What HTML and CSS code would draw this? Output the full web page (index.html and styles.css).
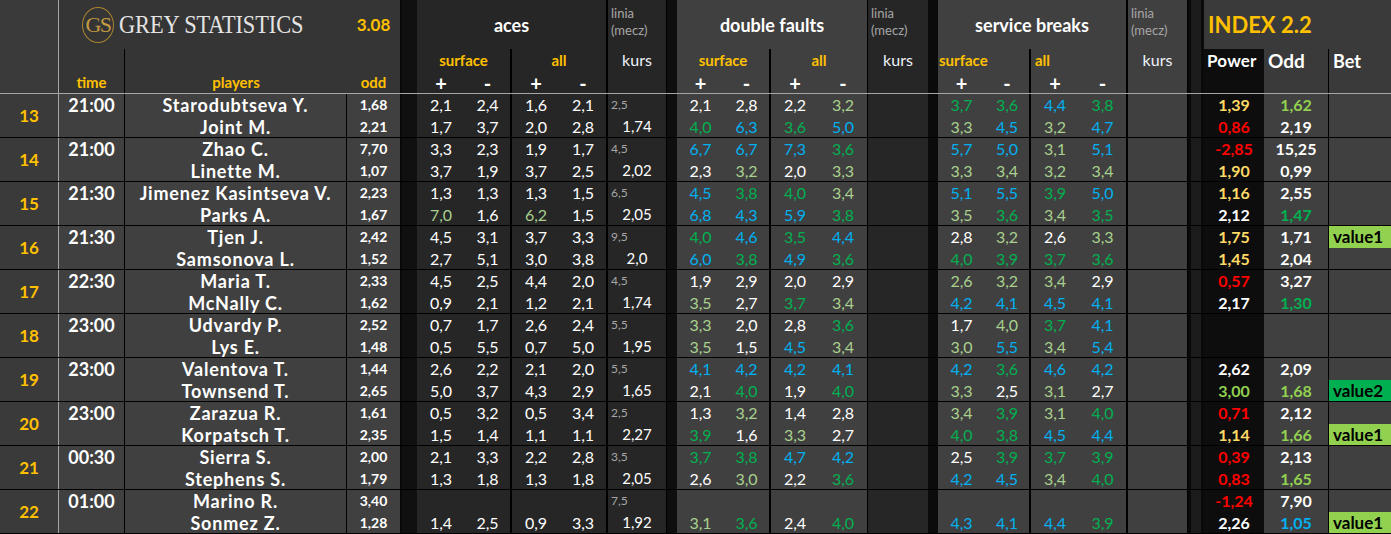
FILE: index.html
```html
<!DOCTYPE html>
<html lang="pl">
<head>
<meta charset="utf-8">
<title>Grey Statistics</title>
<link rel="stylesheet" href="styles.css">
</head>
<body>
<div class="sheet">
  <header class="head">
    <div class="h-num"></div>
    <div class="h-left">
      <div class="brand"><span class="ring">GS</span><span class="brand-name">GREY STATISTICS</span></div>
      <div class="version">3.08</div>
      <div class="lbl lbl-time">time</div>
      <div class="lbl">players</div>
      <div class="lbl">odd</div>
    </div>
    <div class="sep sep-a"></div>
    <div class="grp grp-aces">
      <div class="title dv">aces</div>
      <div class="hkurs dv1"><span class="linia-h">linia<br>(mecz)</span><span class="kurs-h">kurs</span></div>
      <div class="sub dv">surface</div>
      <div class="sub dv">all</div>
      <div class="pm">+</div>
      <div class="pm dv">-</div>
      <div class="pm">+</div>
      <div class="pm dv">-</div>
    </div>
    <div class="sep sep-b"></div>
    <div class="grp grp-df">
      <div class="title dv1">double faults</div>
      <div class="hkurs"><span class="linia-h">linia<br>(mecz)</span><span class="kurs-h">kurs</span></div>
      <div class="sub dv">surface</div>
      <div class="sub dv1">all</div>
      <div class="pm">+</div>
      <div class="pm dv">-</div>
      <div class="pm">+</div>
      <div class="pm dv1">-</div>
    </div>
    <div class="sep sep-c"></div>
    <div class="grp grp-sb">
      <div class="title dv">service breaks</div>
      <div class="hkurs dv1"><span class="linia-h">linia<br>(mecz)</span><span class="kurs-h">kurs</span></div>
      <div class="sub dv">surface</div>
      <div class="sub dv">all</div>
      <div class="pm">+</div>
      <div class="pm dv">-</div>
      <div class="pm">+</div>
      <div class="pm dv">-</div>
    </div>
    <div class="sep sep-d"></div>
    <div class="grp-idx">
      <div class="idx-title">INDEX 2.2</div>
      <div class="idx-h idx-power">Power</div>
      <div class="idx-h idx-odd">Odd</div>
      <div class="idx-h idx-bet">Bet</div>
    </div>
  </header>

  <div class="match">
    <div class="num">13</div>
    <div class="time"><span>21:00</span></div>
    <div class="players"><span>Starodubtseva Y.</span><span>Joint M.</span></div>
    <div class="odd"><span>1,68</span><span>2,21</span></div>
    <div class="sep sep-a"></div>
    <div class="ac"><span>2,1</span><span>1,7</span></div>
    <div class="ac dv"><span>2,4</span><span>3,7</span></div>
    <div class="ac"><span>1,6</span><span>2,0</span></div>
    <div class="ac dv"><span>2,1</span><span>2,8</span></div>
    <div class="kurs ak"><span class="linia">2,5</span><span>1,74</span></div>
    <div class="sep sep-b"></div>
    <div class="df"><span>2,1</span><span class="g">4,0</span></div>
    <div class="df dv"><span>2,8</span><span class="b">6,3</span></div>
    <div class="df"><span>2,2</span><span class="g">3,6</span></div>
    <div class="df dv1"><span class="lg">3,2</span><span class="b">5,0</span></div>
    <div class="kurs dk"></div>
    <div class="sep sep-c"></div>
    <div class="sb"><span class="g">3,7</span><span class="lg">3,3</span></div>
    <div class="sb dv"><span class="g">3,6</span><span class="b">4,5</span></div>
    <div class="sb"><span class="b">4,4</span><span class="lg">3,2</span></div>
    <div class="sb dv"><span class="g">3,8</span><span class="b">4,7</span></div>
    <div class="kurs sk"></div>
    <div class="sep sep-d"></div>
    <div class="power"><span class="y">1,39</span><span class="r">0,86</span></div>
    <div class="odd2"><span class="lm">1,62</span><span>2,19</span></div>
    <div class="bet"></div>
  </div>

  <div class="match">
    <div class="num">14</div>
    <div class="time"><span>21:00</span></div>
    <div class="players"><span>Zhao C.</span><span>Linette M.</span></div>
    <div class="odd"><span>7,70</span><span>1,07</span></div>
    <div class="sep sep-a"></div>
    <div class="ac"><span>3,3</span><span>3,7</span></div>
    <div class="ac dv"><span>2,3</span><span>1,9</span></div>
    <div class="ac"><span>1,9</span><span>3,7</span></div>
    <div class="ac dv"><span>1,7</span><span>2,5</span></div>
    <div class="kurs ak"><span class="linia">4,5</span><span>2,02</span></div>
    <div class="sep sep-b"></div>
    <div class="df"><span class="b">6,7</span><span>2,3</span></div>
    <div class="df dv"><span class="b">6,7</span><span class="lg">3,2</span></div>
    <div class="df"><span class="b">7,3</span><span>2,0</span></div>
    <div class="df dv1"><span class="g">3,6</span><span class="lg">3,3</span></div>
    <div class="kurs dk"></div>
    <div class="sep sep-c"></div>
    <div class="sb"><span class="b">5,7</span><span class="lg">3,3</span></div>
    <div class="sb dv"><span class="b">5,0</span><span class="lg">3,4</span></div>
    <div class="sb"><span class="lg">3,1</span><span class="lg">3,2</span></div>
    <div class="sb dv"><span class="b">5,1</span><span class="lg">3,4</span></div>
    <div class="kurs sk"></div>
    <div class="sep sep-d"></div>
    <div class="power"><span class="r">-2,85</span><span class="y">1,90</span></div>
    <div class="odd2"><span>15,25</span><span>0,99</span></div>
    <div class="bet"></div>
  </div>

  <div class="match">
    <div class="num">15</div>
    <div class="time"><span>21:30</span></div>
    <div class="players"><span>Jimenez Kasintseva V.</span><span>Parks A.</span></div>
    <div class="odd"><span>2,23</span><span>1,67</span></div>
    <div class="sep sep-a"></div>
    <div class="ac"><span>1,3</span><span class="lg">7,0</span></div>
    <div class="ac dv"><span>1,3</span><span>1,6</span></div>
    <div class="ac"><span>1,3</span><span class="lg">6,2</span></div>
    <div class="ac dv"><span>1,5</span><span>1,5</span></div>
    <div class="kurs ak"><span class="linia">6,5</span><span>2,05</span></div>
    <div class="sep sep-b"></div>
    <div class="df"><span class="b">4,5</span><span class="b">6,8</span></div>
    <div class="df dv"><span class="g">3,8</span><span class="b">4,3</span></div>
    <div class="df"><span class="g">4,0</span><span class="b">5,9</span></div>
    <div class="df dv1"><span class="lg">3,4</span><span class="g">3,8</span></div>
    <div class="kurs dk"></div>
    <div class="sep sep-c"></div>
    <div class="sb"><span class="b">5,1</span><span class="lg">3,5</span></div>
    <div class="sb dv"><span class="b">5,5</span><span class="g">3,6</span></div>
    <div class="sb"><span class="g">3,9</span><span class="lg">3,4</span></div>
    <div class="sb dv"><span class="b">5,0</span><span class="g">3,5</span></div>
    <div class="kurs sk"></div>
    <div class="sep sep-d"></div>
    <div class="power"><span class="y">1,16</span><span>2,12</span></div>
    <div class="odd2"><span>2,55</span><span class="g">1,47</span></div>
    <div class="bet"></div>
  </div>

  <div class="match">
    <div class="num">16</div>
    <div class="time"><span>21:30</span></div>
    <div class="players"><span>Tjen J.</span><span>Samsonova L.</span></div>
    <div class="odd"><span>2,42</span><span>1,52</span></div>
    <div class="sep sep-a"></div>
    <div class="ac"><span>4,5</span><span>2,7</span></div>
    <div class="ac dv"><span>3,1</span><span>5,1</span></div>
    <div class="ac"><span>3,7</span><span>3,0</span></div>
    <div class="ac dv"><span>3,3</span><span>3,8</span></div>
    <div class="kurs ak"><span class="linia">9,5</span><span>2,0</span></div>
    <div class="sep sep-b"></div>
    <div class="df"><span class="g">4,0</span><span class="b">6,0</span></div>
    <div class="df dv"><span class="b">4,6</span><span class="g">3,8</span></div>
    <div class="df"><span class="g">3,5</span><span class="b">4,9</span></div>
    <div class="df dv1"><span class="b">4,4</span><span class="g">3,6</span></div>
    <div class="kurs dk"></div>
    <div class="sep sep-c"></div>
    <div class="sb"><span>2,8</span><span class="g">4,0</span></div>
    <div class="sb dv"><span class="lg">3,2</span><span class="g">3,9</span></div>
    <div class="sb"><span>2,6</span><span class="g">3,7</span></div>
    <div class="sb dv"><span class="lg">3,3</span><span class="g">3,6</span></div>
    <div class="kurs sk"></div>
    <div class="sep sep-d"></div>
    <div class="power"><span class="y">1,75</span><span class="y">1,45</span></div>
    <div class="odd2"><span>1,71</span><span>2,04</span></div>
    <div class="bet"><span class="v1">value1</span><span></span></div>
  </div>

  <div class="match">
    <div class="num">17</div>
    <div class="time"><span>22:30</span></div>
    <div class="players"><span>Maria T.</span><span>McNally C.</span></div>
    <div class="odd"><span>2,33</span><span>1,62</span></div>
    <div class="sep sep-a"></div>
    <div class="ac"><span>4,5</span><span>0,9</span></div>
    <div class="ac dv"><span>2,5</span><span>2,1</span></div>
    <div class="ac"><span>4,4</span><span>1,2</span></div>
    <div class="ac dv"><span>2,0</span><span>2,1</span></div>
    <div class="kurs ak"><span class="linia">4,5</span><span>1,74</span></div>
    <div class="sep sep-b"></div>
    <div class="df"><span>1,9</span><span class="lg">3,5</span></div>
    <div class="df dv"><span>2,9</span><span>2,7</span></div>
    <div class="df"><span>2,0</span><span class="g">3,7</span></div>
    <div class="df dv1"><span>2,9</span><span class="lg">3,4</span></div>
    <div class="kurs dk"></div>
    <div class="sep sep-c"></div>
    <div class="sb"><span class="lg">2,6</span><span class="b">4,2</span></div>
    <div class="sb dv"><span class="lg">3,2</span><span class="b">4,1</span></div>
    <div class="sb"><span class="lg">3,4</span><span class="b">4,5</span></div>
    <div class="sb dv"><span>2,9</span><span class="b">4,1</span></div>
    <div class="kurs sk"></div>
    <div class="sep sep-d"></div>
    <div class="power"><span class="r">0,57</span><span>2,17</span></div>
    <div class="odd2"><span>3,27</span><span class="g">1,30</span></div>
    <div class="bet"></div>
  </div>

  <div class="match">
    <div class="num">18</div>
    <div class="time"><span>23:00</span></div>
    <div class="players"><span>Udvardy P.</span><span>Lys E.</span></div>
    <div class="odd"><span>2,52</span><span>1,48</span></div>
    <div class="sep sep-a"></div>
    <div class="ac"><span>0,7</span><span>0,5</span></div>
    <div class="ac dv"><span>1,7</span><span>5,5</span></div>
    <div class="ac"><span>2,6</span><span>0,7</span></div>
    <div class="ac dv"><span>2,4</span><span>5,0</span></div>
    <div class="kurs ak"><span class="linia">5,5</span><span>1,95</span></div>
    <div class="sep sep-b"></div>
    <div class="df"><span class="lg">3,3</span><span class="lg">3,5</span></div>
    <div class="df dv"><span>2,0</span><span>1,5</span></div>
    <div class="df"><span>2,8</span><span class="b">4,5</span></div>
    <div class="df dv1"><span class="g">3,6</span><span class="lg">3,4</span></div>
    <div class="kurs dk"></div>
    <div class="sep sep-c"></div>
    <div class="sb"><span>1,7</span><span class="lg">3,0</span></div>
    <div class="sb dv"><span class="lg">4,0</span><span class="b">5,5</span></div>
    <div class="sb"><span class="g">3,7</span><span class="lg">3,4</span></div>
    <div class="sb dv"><span class="b">4,1</span><span class="b">5,4</span></div>
    <div class="kurs sk"></div>
    <div class="sep sep-d"></div>
    <div class="power"></div>
    <div class="odd2"></div>
    <div class="bet"></div>
  </div>

  <div class="match">
    <div class="num">19</div>
    <div class="time"><span>23:00</span></div>
    <div class="players"><span>Valentova T.</span><span>Townsend T.</span></div>
    <div class="odd"><span>1,44</span><span>2,65</span></div>
    <div class="sep sep-a"></div>
    <div class="ac"><span>2,6</span><span>5,0</span></div>
    <div class="ac dv"><span>2,2</span><span>3,7</span></div>
    <div class="ac"><span>2,1</span><span>4,3</span></div>
    <div class="ac dv"><span>2,0</span><span>2,9</span></div>
    <div class="kurs ak"><span class="linia">5,5</span><span>1,65</span></div>
    <div class="sep sep-b"></div>
    <div class="df"><span class="b">4,1</span><span>2,1</span></div>
    <div class="df dv"><span class="b">4,2</span><span class="g">4,0</span></div>
    <div class="df"><span class="b">4,2</span><span>1,9</span></div>
    <div class="df dv1"><span class="b">4,1</span><span class="g">4,0</span></div>
    <div class="kurs dk"></div>
    <div class="sep sep-c"></div>
    <div class="sb"><span class="b">4,2</span><span class="lg">3,3</span></div>
    <div class="sb dv"><span class="g">3,6</span><span>2,5</span></div>
    <div class="sb"><span class="b">4,6</span><span class="lg">3,1</span></div>
    <div class="sb dv"><span class="b">4,2</span><span>2,7</span></div>
    <div class="kurs sk"></div>
    <div class="sep sep-d"></div>
    <div class="power"><span>2,62</span><span class="lm">3,00</span></div>
    <div class="odd2"><span>2,09</span><span class="lm">1,68</span></div>
    <div class="bet"><span></span><span class="v2">value2</span></div>
  </div>

  <div class="match">
    <div class="num">20</div>
    <div class="time"><span>23:00</span></div>
    <div class="players"><span>Zarazua R.</span><span>Korpatsch T.</span></div>
    <div class="odd"><span>1,61</span><span>2,35</span></div>
    <div class="sep sep-a"></div>
    <div class="ac"><span>0,5</span><span>1,5</span></div>
    <div class="ac dv"><span>3,2</span><span>1,4</span></div>
    <div class="ac"><span>0,5</span><span>1,1</span></div>
    <div class="ac dv"><span>3,4</span><span>1,1</span></div>
    <div class="kurs ak"><span class="linia">2,5</span><span>2,27</span></div>
    <div class="sep sep-b"></div>
    <div class="df"><span>1,3</span><span class="g">3,9</span></div>
    <div class="df dv"><span class="lg">3,2</span><span>1,6</span></div>
    <div class="df"><span>1,4</span><span class="lg">3,3</span></div>
    <div class="df dv1"><span>2,8</span><span>2,7</span></div>
    <div class="kurs dk"></div>
    <div class="sep sep-c"></div>
    <div class="sb"><span class="lg">3,4</span><span class="g">4,0</span></div>
    <div class="sb dv"><span class="g">3,9</span><span class="g">3,8</span></div>
    <div class="sb"><span class="lg">3,1</span><span class="b">4,5</span></div>
    <div class="sb dv"><span class="g">4,0</span><span class="b">4,4</span></div>
    <div class="kurs sk"></div>
    <div class="sep sep-d"></div>
    <div class="power"><span class="r">0,71</span><span class="y">1,14</span></div>
    <div class="odd2"><span>2,12</span><span class="lm">1,66</span></div>
    <div class="bet"><span></span><span class="v1">value1</span></div>
  </div>

  <div class="match">
    <div class="num">21</div>
    <div class="time"><span>00:30</span></div>
    <div class="players"><span>Sierra S.</span><span>Stephens S.</span></div>
    <div class="odd"><span>2,00</span><span>1,79</span></div>
    <div class="sep sep-a"></div>
    <div class="ac"><span>2,1</span><span>1,3</span></div>
    <div class="ac dv"><span>3,3</span><span>1,8</span></div>
    <div class="ac"><span>2,2</span><span>1,3</span></div>
    <div class="ac dv"><span>2,8</span><span>1,8</span></div>
    <div class="kurs ak"><span class="linia">3,5</span><span>2,05</span></div>
    <div class="sep sep-b"></div>
    <div class="df"><span class="g">3,7</span><span>2,6</span></div>
    <div class="df dv"><span class="g">3,8</span><span class="lg">3,0</span></div>
    <div class="df"><span class="b">4,7</span><span>2,2</span></div>
    <div class="df dv1"><span class="b">4,2</span><span class="g">3,6</span></div>
    <div class="kurs dk"></div>
    <div class="sep sep-c"></div>
    <div class="sb"><span>2,5</span><span class="b">4,2</span></div>
    <div class="sb dv"><span class="g">3,9</span><span class="b">4,5</span></div>
    <div class="sb"><span class="g">3,7</span><span class="lg">3,4</span></div>
    <div class="sb dv"><span class="g">3,9</span><span class="g">4,0</span></div>
    <div class="kurs sk"></div>
    <div class="sep sep-d"></div>
    <div class="power"><span class="r">0,39</span><span class="r">0,83</span></div>
    <div class="odd2"><span>2,13</span><span class="lm">1,65</span></div>
    <div class="bet"></div>
  </div>

  <div class="match">
    <div class="num">22</div>
    <div class="time"><span>01:00</span></div>
    <div class="players"><span>Marino R.</span><span>Sonmez Z.</span></div>
    <div class="odd"><span>3,40</span><span>1,28</span></div>
    <div class="sep sep-a"></div>
    <div class="ac"><span></span><span>1,4</span></div>
    <div class="ac dv"><span></span><span>2,5</span></div>
    <div class="ac"><span></span><span>0,9</span></div>
    <div class="ac dv"><span></span><span>3,3</span></div>
    <div class="kurs ak"><span class="linia">7,5</span><span>1,92</span></div>
    <div class="sep sep-b"></div>
    <div class="df"><span></span><span class="lg">3,1</span></div>
    <div class="df dv"><span></span><span class="g">3,6</span></div>
    <div class="df"><span></span><span>2,4</span></div>
    <div class="df dv1"><span></span><span class="g">4,0</span></div>
    <div class="kurs dk"></div>
    <div class="sep sep-c"></div>
    <div class="sb"><span></span><span class="b">4,3</span></div>
    <div class="sb dv"><span></span><span class="b">4,1</span></div>
    <div class="sb"><span></span><span class="b">4,4</span></div>
    <div class="sb dv"><span></span><span class="g">3,9</span></div>
    <div class="kurs sk"></div>
    <div class="sep sep-d"></div>
    <div class="power"><span class="r">-1,24</span><span>2,26</span></div>
    <div class="odd2"><span>7,90</span><span class="b">1,05</span></div>
    <div class="bet"><span></span><span class="v1">value1</span></div>
  </div>
</div>
</body>
</html>
```

FILE: styles.css
```css
* { box-sizing: border-box; }
html, body { margin: 0; padding: 0; }
body {
  width: 1391px;
  height: 534px;
  overflow: hidden;
  background: #404040;
  color: #ffffff;
  font-family: Lato, "Liberation Sans", sans-serif;
}
.sheet { width: 1391px; }

/* ---------- header ---------- */
.head {
  display: flex;
  height: 94px;
  border-bottom: 1px solid #a6a6a6;
}
.h-num {
  width: 59px;
  background: #3a3a3a;
  border-right: 1px solid #a6a6a6;
}
.h-left {
  width: 341px;
  display: grid;
  grid-template-columns: 66px 222px 53px;
  grid-template-rows: 49px 22px 22px;
  background: #353535;
}
.brand {
  grid-column: span 2;
  display: flex;
  align-items: center;
  padding-left: 23px;
}
.ring {
  flex: none;
  width: 32px;
  height: 36px;
  border: 1.5px solid #a9862f;
  border-radius: 50%;
  display: flex;
  align-items: center;
  justify-content: center;
  font-family: "Liberation Serif", serif;
  font-size: 22px;
  letter-spacing: -1.5px;
  color: #c29a42;
}
.brand-name {
  display: inline-block;
  margin-left: 5px;
  font-family: "Liberation Serif", serif;
  font-size: 26px;
  letter-spacing: -0.1px;
  white-space: nowrap;
  color: #e4e4e4;
  transform: scaleX(0.86);
  transform-origin: left center;
}
.version {
  display: flex;
  align-items: center;
  justify-content: center;
  font-weight: 700;
  font-size: 17px;
  color: #ffc000;
}
.lbl {
  grid-row: span 2;
  display: flex;
  align-items: flex-end;
  justify-content: center;
  font-weight: 700;
  font-size: 15px;
  line-height: 22px;
  color: #ffc000;
}
.lbl-time { border-right: 1px solid #000; }

.sep { background: #0e0e0e; }
.sep-a { width: 17px; background: #101010; border-left: 2px solid #080808; }
.sep-b { width: 10px; }
.sep-c { width: 10px; background: #0b0b0b; }
.sep-d {
  width: 16px;
  background: #1c1c1c;
  border-left: 3px solid #0a0a0a;
  border-right: 3px solid #0a0a0a;
}

.grp {
  display: grid;
  grid-template-rows: 49px 22px 22px;
}
.grp-aces { width: 250px; grid-template-columns: 48px 47px 48px 48px 59px; background: #262626; }
.grp-df { width: 251px; grid-template-columns: 47px 47px 48px 49px 60px; background: #404040; }
.grp-sb { width: 250px; grid-template-columns: 47px 46px 48px 49px 60px; background: #404040; }
.grp-df .hkurs { background: #262626; }

.title {
  grid-column: span 4;
  display: flex;
  align-items: center;
  justify-content: center;
  font-weight: 700;
  font-size: 18px;
}
.hkurs {
  grid-row: span 3;
  display: flex;
  flex-direction: column;
}
.linia-h {
  height: 49px;
  padding: 5px 0 0 3px;
  font-size: 13px;
  line-height: 17px;
  color: #a6a6a6;
}
.kurs-h {
  height: 22px;
  line-height: 22px;
  text-align: center;
  font-size: 16px;
  color: #eef3fb;
}
.sub {
  grid-column: span 2;
  text-align: center;
  font-weight: 700;
  font-size: 15px;
  line-height: 22px;
  color: #ffc000;
}
.grp-sb .sub { text-align: left; padding-left: 1px; }
.grp-sb .sub + .sub { padding-left: 4px; }
.pm {
  text-align: center;
  font-weight: 700;
  font-size: 20px;
  line-height: 24px;
}
.dv { border-right: 2px solid #000; }
.dv1 { border-right: 1px solid #000; }

.grp-idx {
  width: 187px;
  display: grid;
  grid-template-columns: 60px 65px 62px;
  grid-template-rows: 49px 44px;
  background: #3a3a3a;
}
.idx-title {
  grid-column: span 3;
  display: flex;
  align-items: center;
  padding-left: 4px;
  font-weight: 700;
  font-size: 22px;
  color: #ffc000;
}
.idx-h {
  font-weight: 700;
  line-height: 24px;
  padding-left: 4px;
}
.idx-power { background: #0d0d0d; font-size: 17px; padding-left: 3px; letter-spacing: 0.2px; }
.idx-odd { font-size: 19px; border-right: 1px solid #000; }
.idx-bet { font-size: 18px; }

/* ---------- match rows ---------- */
.match {
  display: grid;
  grid-template-columns: 59px 66px 222px 53px 17px 48px 47px 48px 48px 59px 10px 47px 47px 48px 49px 60px 10px 47px 46px 48px 49px 60px 16px 60px 65px 62px;
  grid-template-rows: 43px;
  height: 44px;
  border-bottom: 1px solid #000;
}
.match > div {
  display: flex;
  flex-direction: column;
  min-width: 0;
  min-height: 0;
}
.match span {
  display: block;
  flex: none;
  height: 22px;
  line-height: 22px;
  text-align: center;
  white-space: nowrap;
}
.match span + span { height: 21px; line-height: 21px; }

.num {
  justify-content: center;
  align-items: center;
  background: #3a3a3a;
  border-right: 1px solid #a6a6a6;
  font-weight: 700;
  font-size: 17px;
  color: #ffc000;
}
.time { background: #404040; border-right: 1px solid #000; font-weight: 700; font-size: 18px; }
.players {
  background: #404040;
  border-right: 1px solid #000;
  font-weight: 700;
  font-size: 18px;
  letter-spacing: 0.8px;
}
.players span + span { height: 22px; line-height: 22px; }
.odd { background: #404040; font-weight: 700; font-size: 14px; }
.ac { background: #262626; font-size: 16px; }
.df, .sb { background: #404040; font-size: 16px; }
.kurs { font-size: 15px; }
.ak { background: #262626; border-right: 1px solid #000; }
.dk { background: #262626; }
.sk { background: #404040; border-right: 1px solid #000; }
.kurs .linia {
  text-align: left;
  padding-left: 3px;
  font-size: 12px;
  color: #a6a6a6;
}
.power { background: #0d0d0d; font-weight: 700; font-size: 16px; }
.odd2 { background: #404040; border-right: 1px solid #000; font-weight: 700; font-size: 16px; }
.bet { background: #404040; }
.bet span {
  text-align: left;
  padding-left: 4px;
  font-weight: 700;
  font-size: 17px;
  color: #000;
}
.bet .v1 { background: #92d050; }
.bet .v2 { background: #00b050; }

.g { color: #00b050; }
.lg { color: #a9d08e; }
.b { color: #00b0f0; }
.y { color: #ffd966; }
.r { color: #ff0000; }
.lm { color: #92d050; }
```
